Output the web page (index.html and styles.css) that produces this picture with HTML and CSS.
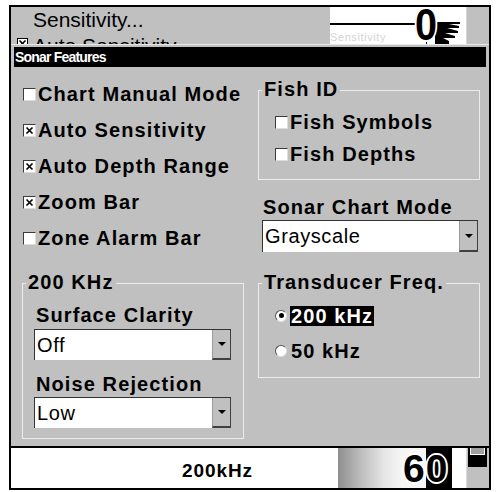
FILE: index.html
```html
<!DOCTYPE html>
<html>
<head>
<meta charset="utf-8">
<title>Sonar Features</title>
<link rel="stylesheet" href="styles.css">
</head>
<body>
<div class="screen">
  <div class="bg-top">
    <div class="bg-menu">
      <div class="bg-item bg-head">Sensitivity...</div>
      <div class="bg-item bg-check"><span class="bg-cb"><svg width="9" height="9" viewBox="0 0 9 9"><path d="M1.5 1.5L7.5 7.5M7.5 1.5L1.5 7.5" stroke="#000" stroke-width="1.6"/></svg></span><span class="bg-cut">Auto Sensitivity</span></div>
    </div>
    <div class="gauge">
      <div class="gauge-line"><div class="rule"></div><div class="faded">Sensitivity</div></div>
      <div class="big0-wrap"><span class="big0">0</span><span class="cursor"></span></div>
      <svg class="streak" width="28" height="37" viewBox="0 0 28 37"><path d="M0 15H25V17H14L24 19V21H12L23 24V26H10L20 29V31H8L14 34V37H0Z" fill="#000"/></svg>
    </div>
    <div class="side"></div>
  </div>

  <div class="dialog">
    <div class="titlebar">Sonar Features</div>
    <div class="dlg-body">
      <div class="col-left">
        <div class="check"><span class="cb"></span>Chart Manual Mode</div>
        <div class="check"><span class="cb"><svg width="9" height="9" viewBox="0 0 9 9"><path d="M1.5 1.5L7.5 7.5M7.5 1.5L1.5 7.5" stroke="#000" stroke-width="1.6"/></svg></span>Auto Sensitivity</div>
        <div class="check"><span class="cb"><svg width="9" height="9" viewBox="0 0 9 9"><path d="M1.5 1.5L7.5 7.5M7.5 1.5L1.5 7.5" stroke="#000" stroke-width="1.6"/></svg></span>Auto Depth Range</div>
        <div class="check"><span class="cb"><svg width="9" height="9" viewBox="0 0 9 9"><path d="M1.5 1.5L7.5 7.5M7.5 1.5L1.5 7.5" stroke="#000" stroke-width="1.6"/></svg></span>Zoom Bar</div>
        <div class="check"><span class="cb"></span>Zone Alarm Bar</div>

        <fieldset class="group g-200">
          <legend>200 KHz</legend>
          <div class="gbody">
            <div class="field-label fl-first">Surface Clarity</div>
            <div class="select sel-first"><span class="value">Off</span><span class="arrow"></span></div>
            <div class="field-label fl-next">Noise Rejection</div>
            <div class="select sel-next"><span class="value">Low</span><span class="arrow"></span></div>
          </div>
        </fieldset>
      </div>

      <div class="col-right">
        <fieldset class="group g-fish">
          <legend>Fish ID</legend>
          <div class="gbody">
            <div class="check small"><span class="cb"></span>Fish Symbols</div>
            <div class="check small"><span class="cb"></span>Fish Depths</div>
          </div>
        </fieldset>

        <div class="field-label scm">Sonar Chart Mode</div>
        <div class="select wide"><span class="value">Grayscale</span><span class="arrow"></span></div>

        <fieldset class="group g-freq">
          <legend>Transducer Freq.</legend>
          <div class="gbody">
            <div class="radio-row"><span class="radio on"></span><span class="rtext hl">200 kHz</span></div>
            <div class="radio-row"><span class="radio"></span><span class="rtext">50 kHz</span></div>
          </div>
        </fieldset>
      </div>
    </div>
  </div>

  <div class="status">
    <div class="freq">200kHz</div>
    <div class="sonar">60</div>
    <div class="side-col"><div class="blk"><div class="blk-in"></div></div></div>
  </div>
</div>
</body>
</html>
```

FILE: styles.css
```css
* { box-sizing: border-box; }
html, body { margin: 0; padding: 0; background: #fff; }
body { font-family: "Liberation Sans", Arial, sans-serif; color: #000; }

.screen {
  margin: 5px 0 0 9px;
  width: 482px;
  height: 485px;
  border: 2px solid #000;
  background: #c0c0c0;
  display: flex;
  flex-direction: column;
  overflow: hidden;
}

/* background screen peeking above the dialog */
.bg-top { flex: none; height: 37px; display: flex; overflow: hidden; }
.bg-menu { flex: 1; font-size: 21px; line-height: 26px; }
.bg-item { display: flex; white-space: nowrap; }
.bg-head { padding-left: 22px; }
.bg-check { padding-left: 6px; height: 11px; overflow: hidden; }
.bg-cb {
  flex: none; width: 11px; height: 11px; margin: 5px 5px 0 0;
  border: 1px solid #000; background: #fff;
  display: flex; align-items: center; justify-content: center;
}
.bg-cut { display: block; height: 11px; overflow: hidden; }
.gauge { width: 136px; flex: none; background: #fff; display: flex; align-items: flex-start; }
.gauge-line { width: 85px; flex: none; }
.rule { height: 2px; background: #000; margin-top: 16px; }
.faded { margin-top: 7px; font-size: 11px; line-height: 11px; color: #d4d4d4; letter-spacing: 0.6px; white-space: nowrap; }
.big0-wrap { flex: none; width: 22px; height: 37px; display: flex; flex-direction: column; align-items: center; }
.big0 {
  display: block; width: 22px; height: 33px;
  font-weight: bold; font-size: 45px; line-height: 35px;
  transform: scaleX(0.88); transform-origin: left center;
  text-shadow: -2px 0 #fff, 2px 0 #fff, 0 -2px #fff, 0 2px #fff, -1px -1px #fff, 1px 1px #fff, -1px 1px #fff, 1px -1px #fff;
}
.cursor { width: 1px; height: 4px; background: #000; }
.streak { flex: none; display: block; margin-left: -2px; }
.side { width: 23px; flex: none; margin-left: auto; border-left: 1px solid #d8d8d8; }

/* dialog */
.dialog {
  flex: none; height: 404px;
  border-top: 1px solid #e8e8e8;
  border-bottom: 2px solid #000;
  padding-top: 2px;
  display: flex; flex-direction: column;
}
.titlebar {
  flex: none; margin: 0 3px; height: 20px; padding-left: 1px;
  background: #000; color: #fff;
  font-weight: bold; font-size: 14px; line-height: 20px; letter-spacing: -0.8px;
}
.dlg-body {
  flex: 1;
  display: grid;
  grid-template-columns: 222px 222px;
  column-gap: 14px;
  align-items: start;
  padding: 9px 9px 0 11px;
}
.col-right { margin-top: 3px; }

.check {
  display: flex; align-items: center; height: 36px; padding-left: 1px;
  font-weight: bold; font-size: 20px; letter-spacing: 1.1px; white-space: nowrap;
}
.check.small { height: 32px; padding-left: 0; }
.cb {
  flex: none; width: 13px; height: 13px; margin-right: 2px;
  background: #fff;
  border: 1px solid; border-color: #3a3a3a #dcdcdc #dcdcdc #3a3a3a;
  display: flex; align-items: center; justify-content: center;
}
.cb svg { display: block; }

.group { margin: 0; padding: 0; min-width: 0; border: 1px solid #ececec; }
.group legend {
  margin-left: 3px; padding: 0 2px 3px;
  font-weight: bold; font-size: 20px; line-height: 20px; letter-spacing: 1.1px; white-space: nowrap;
}
.g-200 { margin-top: 16px; }
.g-200 .gbody { padding: 0 12px 10px 11px; }
.g-fish .gbody { padding: 4px 10px 9px 16px; }
.g-freq { margin-top: 20px; }
.g-freq .gbody { padding: 3px 10px 9px 16px; }

.field-label {
  font-weight: bold; font-size: 20px; line-height: 22px; letter-spacing: 1.1px;
  padding-left: 2px; white-space: nowrap;
}
.fl-first { margin-top: 9px; }
.fl-next { margin-top: 13px; }
.scm { margin-top: 16px; padding-left: 5px; }

.select {
  display: flex; height: 31px;
  border-top: 1px solid #333; border-left: 1px solid #333;
  background: #fff;
}
.sel-first { margin-top: 3px; }
.sel-next { margin-top: 2px; }
.select.wide { margin: 2px 0 0 4px; width: 216px; height: 32px; }
.select .value {
  flex: 1; display: flex; align-items: center; padding-left: 2px;
  font-size: 20px; letter-spacing: 0.6px;
}
.select .arrow {
  flex: none; width: 19px;
  background: #c0c0c0;
  border-left: 1px solid #9a9a9a;
  border-right: 1px solid #404040;
  border-bottom: 2px solid #404040;
  display: flex; align-items: center; justify-content: center;
}
.select .arrow::after {
  content: "";
  border-left: 4px solid transparent;
  border-right: 4px solid transparent;
  border-top: 4px solid #000;
}

.radio-row { display: flex; align-items: center; height: 35px; }
.radio {
  flex: none; width: 12px; height: 12px; margin-right: 3px;
  border-radius: 50%; background: #fff;
  border: 1px solid; border-color: #555 #e0e0e0 #e0e0e0 #555;
  display: flex; align-items: center; justify-content: center;
}
.radio.on::after { content: ""; width: 5px; height: 5px; border-radius: 50%; background: #000; }
.rtext {
  padding: 0 1px; line-height: 20px;
  font-weight: bold; font-size: 20px; letter-spacing: 1.1px; white-space: nowrap;
}
.hl { background: #000; color: #fff; }

/* status strip */
.status { flex: none; height: 40px; display: flex; background: #fff; }
.freq {
  width: 391px; flex: none;
  padding: 6px 0 0 22px; text-align: center;
  font-weight: bold; font-size: 19px; line-height: 34px; letter-spacing: 0.9px;
  background: linear-gradient(to right, #fff 0, #fff 327px, #8f8f8f 327px, #b4b4b4 345px, #e4e4e4 372px, #f6f6f6 391px);
}
.sonar {
  width: 64px; flex: none;
  padding: 2px 0 0 1px;
  font-weight: bold; font-size: 39px; line-height: 38px; letter-spacing: 1px;
  background: linear-gradient(to right, #f6f6f6 0, #f6f6f6 24px, #000 24px, #000 50px, #fff 50px);
  text-shadow: -2px 0 #fff, 2px 0 #fff, 0 -2px #fff, 0 2px #fff, -1px -1px #fff, 1px 1px #fff, -1px 1px #fff, 1px -1px #fff;
}
.side-col { width: 23px; flex: none; background: #c0c0c0; border-left: 1px solid #dcdcdc; padding-left: 1px; }
.blk { width: 19px; height: 19px; background: #000; padding: 0 2px; }
.blk-in { height: 7px; border: 1px solid #fff; border-top: 0; background: #a0a0a0; }
```
